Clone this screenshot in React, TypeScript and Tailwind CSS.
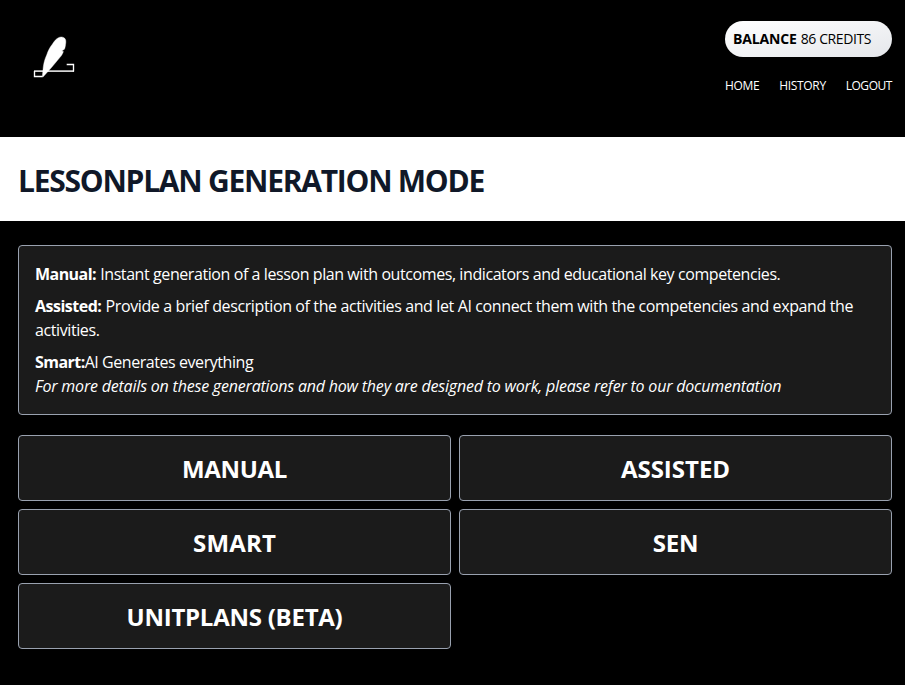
const modes = [
  { name: "MANUAL", tracking: "tracking-[-0.3px]" },
  { name: "ASSISTED", tracking: "tracking-[-0.02px]" },
  { name: "SMART", tracking: "tracking-[0.15px]" },
  { name: "SEN", tracking: "tracking-[-0.3px]" },
  { name: "UNITPLANS (BETA)", tracking: "tracking-[-0.25px]" },
];

function Logo() {
  return (
    <svg className="h-12 w-12" viewBox="0 0 48 48" fill="none">
      <path d="M4 41.100H44" stroke="#d4d4d4" strokeWidth="1.600" />
      <path d="M36.700 34.500H43.500V41.500M4.500 41V46.500H12.500" stroke="white" strokeWidth="1.350" />
      <path
        d="M12.300 46.800 13.300 36.700C14 32 15 28.500 16.700 25C18.200 20.500 20 17 22.300 14.300C24.500 10.800 26 9 28 8C30 6.800 32 6.700 33.500 7.500C35.500 8.500 36 10 35.800 12.500C35.500 15.500 35.200 17.500 34.400 19.300L31.700 21 33.400 21.600C32.500 24 31.500 25.800 30 27.300L21.700 37.300 13.200 46.800Z"
        fill="white"
        stroke="white"
        strokeWidth="0.4"
      />
    </svg>
  );
}

export default function App() {
  return (
    <div className="min-h-[685px] bg-black font-['Open_Sans','Noto_Sans',sans-serif] text-white">
      <header className="flex h-[137px] items-start justify-between pr-[13px] pl-[30px]">
        <div className="pt-[30px]">
          <Logo />
        </div>
        <div className="flex flex-col pt-[21px]">
          <div className="flex h-9 w-[167px] items-center gap-1 rounded-full bg-linear-to-br from-white to-gray-200 pl-2 text-sm whitespace-nowrap text-black">
            <b className="font-bold tracking-[-0.15px]">BALANCE</b>
            <span className="tracking-[-0.4px]">86 CREDITS</span>
          </div>
          <nav className="mt-[21px] flex justify-between text-xs">
            <a className="tracking-[-0.3px]">HOME</a>
            <a className="tracking-[-0.35px]">HISTORY</a>
            <a className="tracking-[-0.45px]">LOGOUT</a>
          </nav>
        </div>
      </header>

      <div className="flex h-[84px] items-center bg-white pt-1 pl-[18px]">
        <h1 className="text-3xl font-bold tracking-[-1.25px] whitespace-nowrap text-gray-900">LESSONPLAN GENERATION MODE</h1>
      </div>

      <main className="pt-6 pr-[13px] pl-[18px]">
        <section className="h-[170px] rounded-[4px] border border-gray-400 bg-[#1b1b1b] p-4 text-base whitespace-nowrap">
          <p className="mb-2">
            <b className="tracking-[-0.55px]">Manual:</b>{" "}
            <span className="tracking-[-0.417px]">Instant generation of a lesson plan with outcomes, indicators and educational key competencies.</span>
          </p>
          <p className="mb-2">
            <b className="tracking-[-0.5px]">Assisted:</b>{" "}
            <span className="tracking-[-0.38px]">Provide a brief description of the activities and let AI connect them with the competencies and expand the</span>
            <br />
            <span className="tracking-[-0.4px]">activities.</span>
          </p>
          <p>
            <b className="tracking-[-0.55px]">Smart:</b>
            <span className="tracking-[-0.44px]">AI Generates everything</span>
            <br />
            <i className="tracking-[-0.2px]">For more details on these generations and how they are designed to work, please refer to our documentation</i>
          </p>
        </section>

        <div className="mt-5 grid grid-cols-2 gap-2">
          {modes.map((mode) => (
            <button
              key={mode.name}
              className="flex h-[66px] items-center justify-center rounded-[4px] border border-gray-400 bg-[#1b1b1b] pt-0.5 text-2xl font-bold"
            >
              <span className={mode.tracking}>{mode.name}</span>
            </button>
          ))}
        </div>
      </main>
    </div>
  );
}
